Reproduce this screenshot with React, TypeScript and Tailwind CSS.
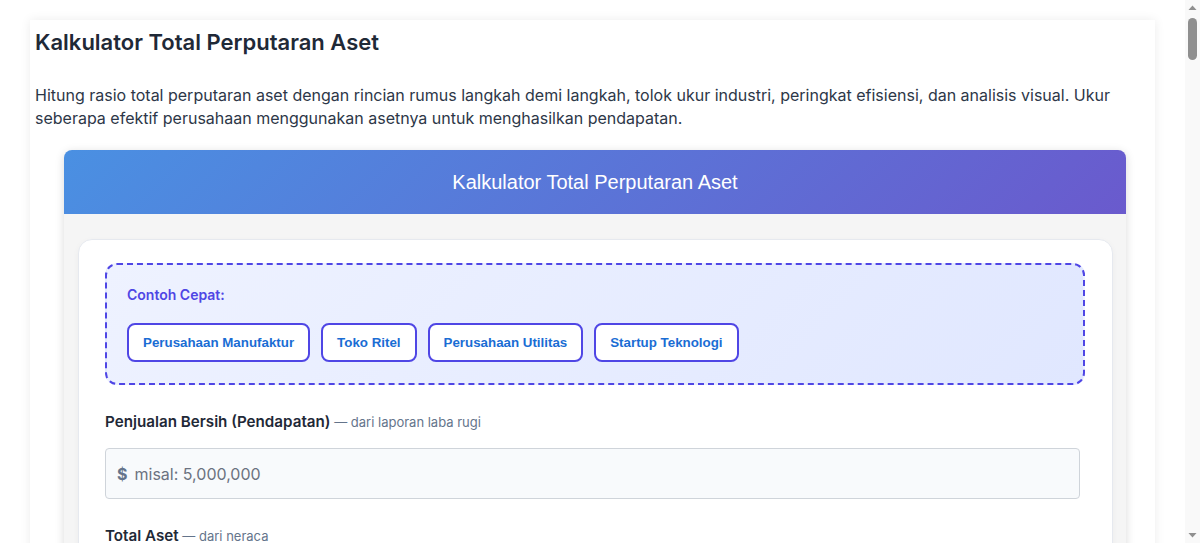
import React from "react";

const examples = ["Perusahaan Manufaktur", "Toko Ritel", "Perusahaan Utilitas", "Startup Teknologi"];

function Field({ label, hint, placeholder }: { label: string; hint: string; placeholder: string }) {
  return (
    <div className="mt-[25px]">
      <div className="leading-[22px]">
        <span className="text-[15.2px] font-semibold text-[#1f2937]">{label}</span>
        <span className="text-[13px] text-[#64748b]"> — {hint}</span>
      </div>
      <div className="mt-[15px] mr-[5px] flex h-[51px] items-center rounded-[4px] border border-[#cfd4da] bg-[#f8fafc] px-[11px]">
        <span className="text-[16px] font-bold text-[#64748b]">$</span>
        <span className="ml-[7px] text-[16px] text-[#6b7280]">{placeholder}</span>
      </div>
    </div>
  );
}

function FakeScrollbar() {
  return (
    <div className="fixed right-0 top-0 flex h-screen w-[15px] flex-col items-center bg-[#f9f9f9]">
      <svg width="15" height="15" viewBox="0 0 15 15" className="shrink-0">
        <polygon points="3.5,10 11.5,10 7.5,5.5" fill="#8f8f8f" />
      </svg>
      <div className="mt-[3px] h-[42px] w-[9px] rounded-full bg-[#8f8f8f]" />
      <div className="flex-1" />
      <svg width="15" height="15" viewBox="0 0 15 15" className="shrink-0">
        <polygon points="3.5,5 11.5,5 7.5,9.5" fill="#8f8f8f" />
      </svg>
    </div>
  );
}

export default function App() {
  return (
    <div className="min-h-screen bg-white pb-10 pr-[15px] font-['Inter',sans-serif]">
      <div className="ml-[30px] mr-[30px] mt-[20px] bg-white px-[5px] pt-[7px] pb-10 shadow-[0_0_10px_rgba(0,0,0,0.08)]">
        <h1 className="text-[22px] font-semibold leading-[30px] text-[#1f2937]">Kalkulator Total Perputaran Aset</h1>
        <p className="mt-[27px] text-[16px] leading-[23px] text-[#2d3748]">
          Hitung rasio total perputaran aset dengan rincian rumus langkah demi langkah, tolok ukur industri, peringkat efisiensi, dan analisis visual. Ukur seberapa efektif perusahaan menggunakan asetnya untuk menghasilkan pendapatan.
        </p>
        <div className="ml-[29px] mt-[20px] w-[1062px] overflow-hidden rounded-[8px] bg-[#f5f5f5] shadow-[0_2px_10px_rgba(0,0,0,0.15)]">
          <div className="flex h-[64px] items-center justify-center bg-[linear-gradient(135deg,#4a90e2,#6a5acd)]">
            <span className="font-['Liberation_Sans',Arial,sans-serif] text-[20px] text-white">Kalkulator Total Perputaran Aset</span>
          </div>
          <div className="pt-[25px] pl-[14px] pr-[13px] pb-10">
            <div className="rounded-[14px] border border-[#e6e9ef] bg-white pl-[26px] pr-[27px] pt-[23px] pb-10 shadow-[0_2px_6px_rgba(0,0,0,0.04)]">
              <div className="rounded-[12px] border-2 border-dashed border-[#4f46e5] bg-[linear-gradient(135deg,#eef2ff,#e0e7ff)] px-[20px] pt-[20px] pb-[21px]">
                <div className="text-[14px] font-semibold leading-[20px] text-[#4f46e5]">Contoh Cepat:</div>
                <div className="mt-[18px] flex gap-[11px]">
                  {examples.map((e) => (
                    <button
                      key={e}
                      className="h-[39px] rounded-[8px] border-2 border-[#4f46e5] bg-white px-[14px] font-['Liberation_Sans',Arial,sans-serif] text-[13.33px] font-bold text-[#1a6dd4]"
                    >
                      {e}
                    </button>
                  ))}
                </div>
              </div>
              <Field label="Penjualan Bersih (Pendapatan)" hint="dari laporan laba rugi" placeholder="misal: 5,000,000" />
              <Field label="Total Aset" hint="dari neraca" placeholder="misal: 2,500,000" />
              <Field label="Total Aset Awal Periode" hint="opsional" placeholder="misal: 2,300,000" />
              <button className="mt-[25px] h-[48px] w-full rounded-[8px] bg-[linear-gradient(135deg,#4a90e2,#6a5acd)] text-[16px] font-semibold text-white">
                Hitung Perputaran Aset
              </button>
            </div>
          </div>
        </div>
      </div>
      <FakeScrollbar />
    </div>
  );
}
